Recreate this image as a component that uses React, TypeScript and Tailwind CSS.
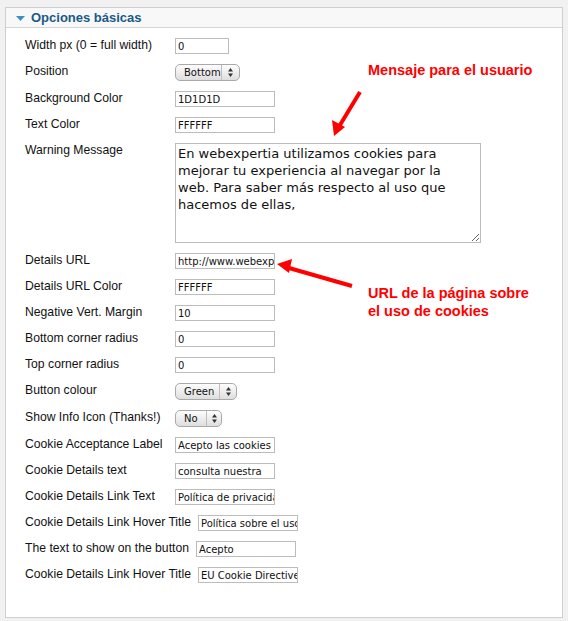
import React from 'react';

type Field =
  | { kind: 'input'; label: string; value: string; width: number }
  | { kind: 'select'; label: string; value: string; textW: number; arrowW: number }
  | { kind: 'textarea'; label: string; value: string };

const FIELDS: Field[] = [
  { kind: 'input', label: 'Width px (0 = full width)', value: '0', width: 54 },
  { kind: 'select', label: 'Position', value: 'Bottom', textW: 45, arrowW: 17 },
  { kind: 'input', label: 'Background Color', value: '1D1D1D', width: 100 },
  { kind: 'input', label: 'Text Color', value: 'FFFFFF', width: 100 },
  {
    kind: 'textarea',
    label: 'Warning Message',
    value: 'En webexpertia utilizamos cookies para mejorar tu experiencia al navegar por la web. Para saber más respecto al uso que hacemos de ellas,',
  },
  { kind: 'input', label: 'Details URL', value: 'http://www.webexpertia.com/politica-de-cookies', width: 100 },
  { kind: 'input', label: 'Details URL Color', value: 'FFFFFF', width: 100 },
  { kind: 'input', label: 'Negative Vert. Margin', value: '10', width: 100 },
  { kind: 'input', label: 'Bottom corner radius', value: '0', width: 100 },
  { kind: 'input', label: 'Top corner radius', value: '0', width: 100 },
  { kind: 'select', label: 'Button colour', value: 'Green', textW: 43, arrowW: 16 },
  { kind: 'select', label: 'Show Info Icon (Thanks!)', value: 'No', textW: 30, arrowW: 14 },
  { kind: 'input', label: 'Cookie Acceptance Label', value: 'Acepto las cookies de este sitio', width: 100 },
  { kind: 'input', label: 'Cookie Details text', value: 'consulta nuestra', width: 100 },
  { kind: 'input', label: 'Cookie Details Link Text', value: 'Política de privacidad', width: 100 },
  { kind: 'input', label: 'Cookie Details Link Hover Title', value: 'Política sobre el uso de cookies', width: 100 },
  { kind: 'input', label: 'The text to show on the button', value: 'Acepto', width: 100 },
  { kind: 'input', label: 'Cookie Details Link Hover Title', value: 'EU Cookie Directive', width: 100 },
];

const lucida = { fontFamily: '"DejaVu Sans", sans-serif' };

function UpDown() {
  return (
    <svg width="5" height="9" viewBox="0 0 5 9">
      <path d="M2.5 0 L5 3.5 L0 3.5 Z" fill="#333" />
      <path d="M0 5.5 L5 5.5 L2.5 9 Z" fill="#333" />
    </svg>
  );
}

function Control({ field }: { field: Field }) {
  if (field.kind === 'input') {
    return (
      <input
        readOnly
        value={field.value}
        style={{ ...lucida, width: field.width }}
        className="h-[16px] border border-[#bcbcbc] bg-white pl-[2px] pr-0 text-[10px] text-[#111] outline-none"
      />
    );
  }
  if (field.kind === 'textarea') {
    return (
      <textarea
        readOnly
        value={field.value}
        style={lucida}
        className="h-[100px] w-[306px] border border-[#bcbcbc] bg-white pl-[2px] pr-[24px] pt-[1px] text-[13px] leading-[17px] text-[#111] outline-none"
      />
    );
  }
  return (
    <div className="flex h-[17px] items-stretch rounded-[5px] border border-[#a9a9a9] bg-gradient-to-b from-[#fdfdfd] to-[#dedede]">
      <div
        style={{ ...lucida, width: field.textW }}
        className="flex items-center pl-[8px] text-[10px] leading-none whitespace-nowrap text-[#111]"
      >
        {field.value}
      </div>
      <div className="w-px bg-[#bdbdbd]" />
      <div style={{ width: field.arrowW }} className="flex items-center justify-center">
        <UpDown />
      </div>
    </div>
  );
}

export default function App() {
  return (
    <div className="min-h-[621px] w-[568px] bg-[#f1f1f1] px-[5px] pt-[7px] pb-[5px]">
      <div className="relative border border-[#cfcfcf] bg-white">
        {/* Header */}
        <div className="flex h-[20px] items-center border-b border-[#d6d6d6] bg-[#f8f8f8] pl-[10px]">
          <svg width="9" height="5" viewBox="0 0 9 5" className="mt-[2px]">
            <path d="M0 0 L9 0 L4.5 5 Z" fill="#3d8fc6" />
          </svg>
          <span className="ml-[6px] font-['Liberation_Sans',Arial,sans-serif] text-[13px] font-bold leading-[19px] text-[#1b5a86]">
            Opciones básicas
          </span>
        </div>

        {/* Form rows */}
        <div className="pl-[19px] pt-[10px] pb-[24px] font-['Liberation_Sans',Arial,sans-serif] text-[12.2px] leading-[15px] text-[#111]">
          {FIELDS.map((f, i) => (
            <div key={i} className="mb-[10px] flex items-start">
              <label className="min-w-[150px] pr-[7px]">{f.label}</label>
              <Control field={f} />
            </div>
          ))}
        </div>

        {/* Annotations */}
        <div className="absolute left-[362px] top-[53px] font-['Liberation_Sans',Arial,sans-serif] text-[14.5px] font-bold leading-[18px] text-[#f00]">
          Mensaje para el usuario
        </div>
        <div className="absolute left-[362px] top-[276px] font-['Liberation_Sans',Arial,sans-serif] text-[14.5px] font-bold leading-[18px] text-[#f00]">
          URL de la página sobre
          <br />
          el uso de cookies
        </div>
        <svg className="pointer-events-none absolute left-[-6px] top-[-8px]" width="568" height="621">
          <line x1="360" y1="92" x2="340" y2="125" stroke="#f00" strokeWidth="4" />
          <path d="M334 136 L332 120 L345 127 Z" fill="#f00" />
          <line x1="352" y1="286" x2="289" y2="268" stroke="#f00" strokeWidth="4" />
          <path d="M277 264 L292 259 L289 273 Z" fill="#f00" />
        </svg>
      </div>
    </div>
  );
}
